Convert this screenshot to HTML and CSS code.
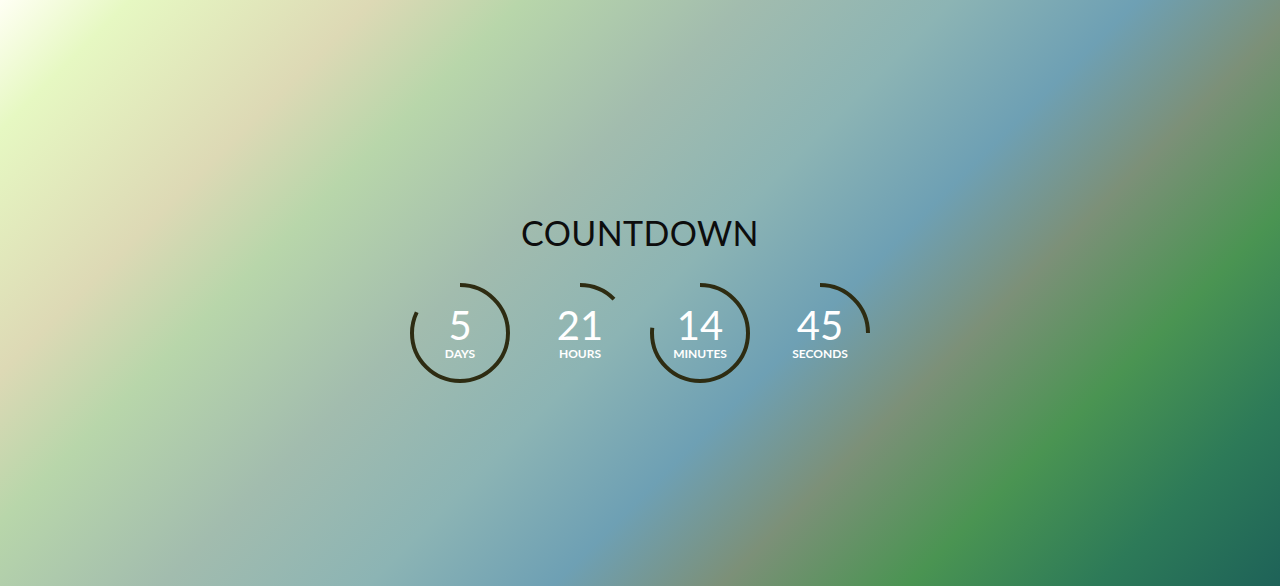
FILE: index.html
```html
<!DOCTYPE html>
<html lang="en">
<head>
<meta charset="utf-8">
<title>Countdown</title>
<link rel="stylesheet" href="styles.css">
</head>
<body>
<main class="page">
  <h1 class="title">COUNTDOWN</h1>
  <div class="timer">
    <div class="unit">
      <svg class="ring" viewBox="0 0 100 100"><circle cx="50" cy="50" r="48" stroke-dasharray="247.3 301.6"/></svg>
      <div class="value">5</div>
      <div class="label">DAYS</div>
    </div>
    <div class="unit">
      <svg class="ring" viewBox="0 0 100 100"><circle cx="50" cy="50" r="48" stroke-dasharray="37.7 301.6"/></svg>
      <div class="value">21</div>
      <div class="label">HOURS</div>
    </div>
    <div class="unit">
      <svg class="ring" viewBox="0 0 100 100"><circle cx="50" cy="50" r="48" stroke-dasharray="231.2 301.6"/></svg>
      <div class="value">14</div>
      <div class="label">MINUTES</div>
    </div>
    <div class="unit">
      <svg class="ring" viewBox="0 0 100 100"><circle cx="50" cy="50" r="48" stroke-dasharray="75.4 301.6"/></svg>
      <div class="value">45</div>
      <div class="label">SECONDS</div>
    </div>
  </div>
</main>
</body>
</html>
```
FILE: styles.css
```css
html, body {
  margin: 0;
  height: 100%;
}
body {
  font-family: Lato, "Noto Sans", sans-serif;
  background: linear-gradient(135deg,
    #fffff4 0%,
    #e6f8c2 7%,
    #ddd9b5 20%,
    #b8d6aa 28%,
    #a2bcae 40%,
    #8cb4b4 51%,
    #6ea0b4 61%,
    #7c9078 70%,
    #4a9452 80%,
    #2d7a58 90%,
    #1e6258 100%);
  overflow: hidden;
}
.page {
  height: 100%;
  box-sizing: border-box;
  padding-top: 10px;
  display: flex;
  flex-direction: column;
  align-items: center;
  justify-content: center;
}
.title {
  margin: 0 0 29px;
  font-size: 34px;
  line-height: 1.2;
  font-weight: 400;
  letter-spacing: 0.4px;
  color: #0d0d0d;
}
.timer {
  display: flex;
  gap: 20px;
}
.unit {
  position: relative;
  width: 100px;
  height: 100px;
  display: flex;
  flex-direction: column;
  align-items: center;
  justify-content: center;
  color: #ffffff;
}
.ring {
  position: absolute;
  inset: 0;
  width: 100px;
  height: 100px;
  transform: rotate(-90deg);
}
.ring circle {
  fill: none;
  stroke: #2e2c12;
  stroke-width: 4;
}
.value {
  font-size: 40px;
  line-height: 1;
  font-weight: 400;
}
.label {
  margin-top: 3px;
  font-size: 12px;
  line-height: 1;
  font-weight: 700;
  letter-spacing: 0;
}
```
